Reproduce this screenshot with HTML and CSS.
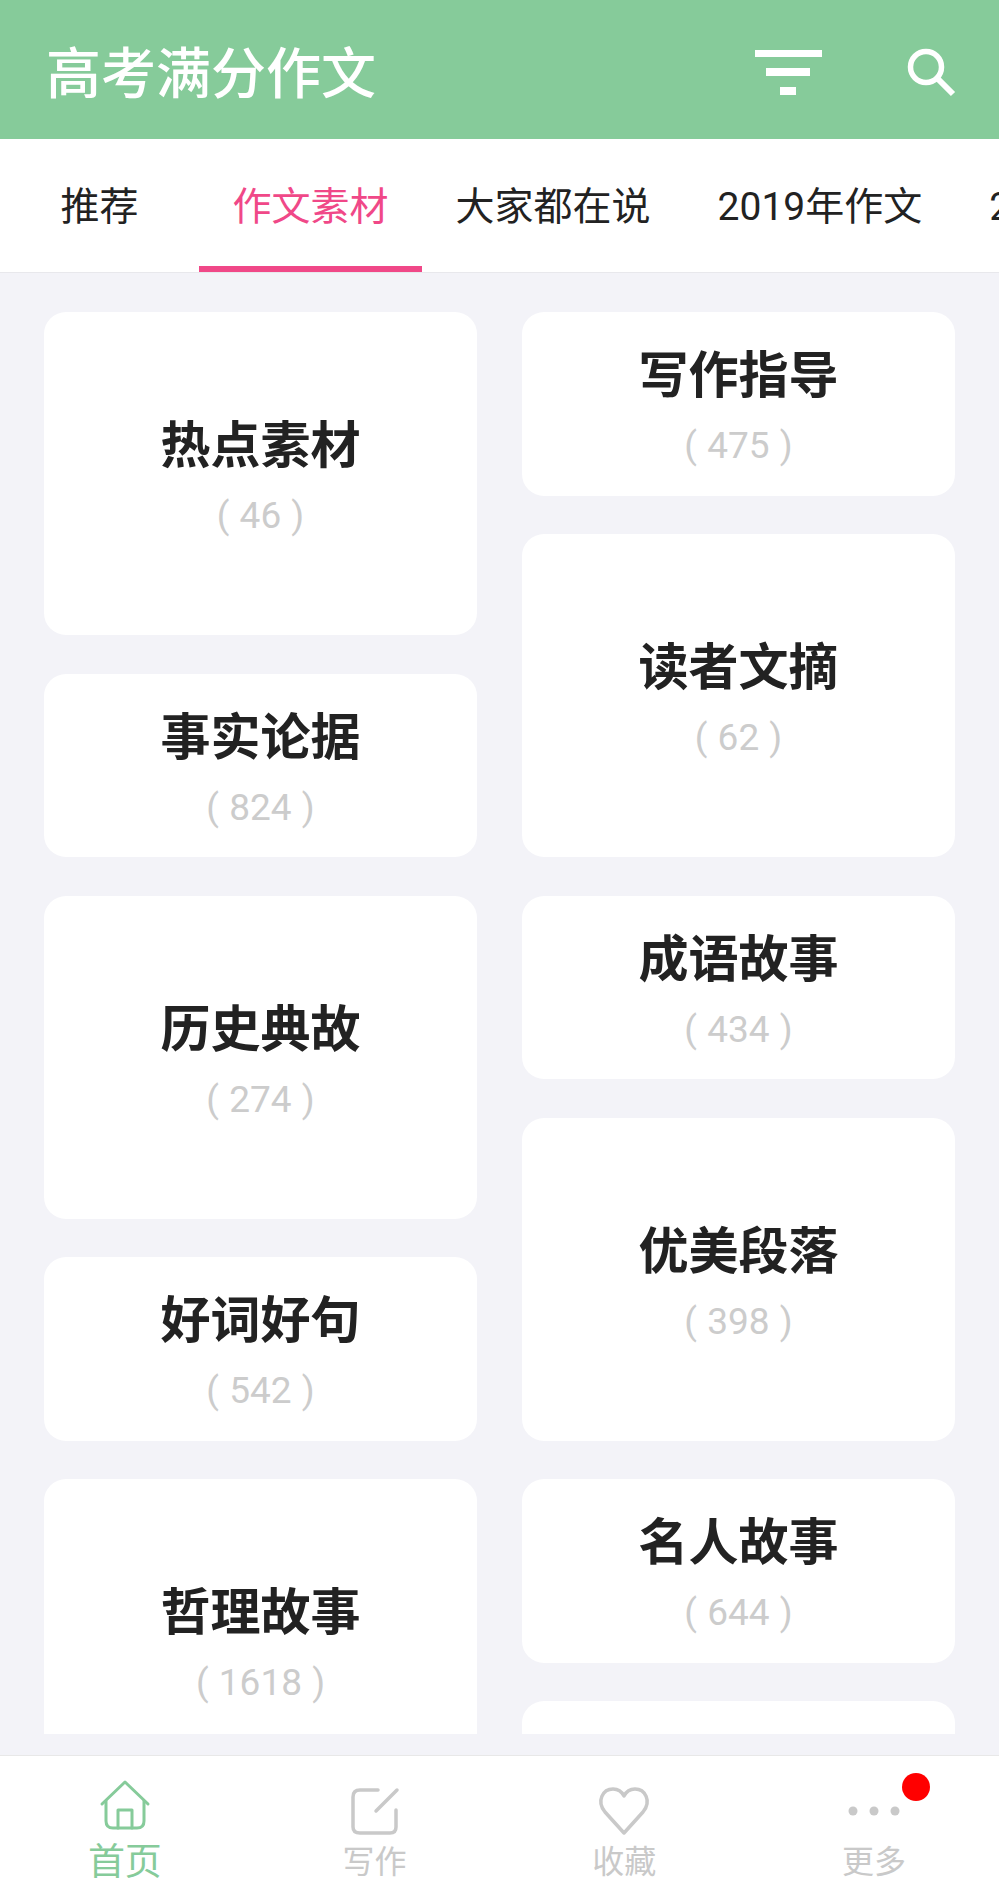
FILE: index.html
```html
<!DOCTYPE html>
<html lang="zh-CN">
<head>
    <meta charset="UTF-8">
    <meta name="viewport" content="width=device-width, initial-scale=1.0">
    <title>高考满分作文</title>
    <link rel="stylesheet" href="styles.css">
</head>
<body>

<header class="topbar">
    <h1 class="app-title">高考满分作文</h1>
    <div class="top-icons">
        <svg class="icon-filter" width="67" height="45" viewBox="0 0 67 45">
            <rect x="0" y="0" width="67" height="7" fill="#fff"/>
            <rect x="11" y="18" width="44" height="8" fill="#fff"/>
            <rect x="25" y="37" width="16" height="8" fill="#fff"/>
        </svg>
        <svg class="icon-search" width="50" height="50" viewBox="0 0 50 50">
            <circle cx="19" cy="19" r="15.5" fill="none" stroke="#fff" stroke-width="5.5"/>
            <path d="M30 30 L46 46" fill="none" stroke="#fff" stroke-width="6"/>
        </svg>
    </div>
</header>

<nav class="tabs">
    <a class="tab first">推荐</a>
    <a class="tab active">作文素材</a>
    <a class="tab">大家都在说</a>
    <a class="tab">2019年作文</a>
    <a class="tab">2018年作文</a>
</nav>

<main class="content">
    <div class="list">
        <div class="column">
            <div class="card tall"><div class="card-title">热点素材</div><div class="card-count">( 46 )</div></div>
            <div class="card"><div class="card-title">事实论据</div><div class="card-count">( 824 )</div></div>
            <div class="card tall"><div class="card-title">历史典故</div><div class="card-count">( 274 )</div></div>
            <div class="card"><div class="card-title">好词好句</div><div class="card-count">( 542 )</div></div>
            <div class="card tall"><div class="card-title">哲理故事</div><div class="card-count">( 1618 )</div></div>
        </div>
        <div class="column">
            <div class="card"><div class="card-title">写作指导</div><div class="card-count">( 475 )</div></div>
            <div class="card tall"><div class="card-title">读者文摘</div><div class="card-count">( 62 )</div></div>
            <div class="card"><div class="card-title">成语故事</div><div class="card-count">( 434 )</div></div>
            <div class="card tall"><div class="card-title">优美段落</div><div class="card-count">( 398 )</div></div>
            <div class="card"><div class="card-title">名人故事</div><div class="card-count">( 644 )</div></div>
            <div class="card"></div>
        </div>
    </div>
</main>

<footer class="bottom-nav">
    <a class="nav-item current">
        <svg width="60" height="60" viewBox="0 0 60 60" fill="none" stroke="#86cb9a" stroke-width="3" stroke-linejoin="round" stroke-linecap="round">
            <path d="M7 27 L30 5 L53 27"/>
            <path d="M11 24 V44 Q11 51 18 51 H42 Q49 51 49 44 V24"/>
            <path d="M23 51 V33 H37 V51"/>
        </svg>
        <span class="nav-label">首页</span>
    </a>
    <a class="nav-item">
        <svg width="60" height="60" viewBox="0 0 60 60" fill="none" stroke="#c9c9c9" stroke-width="3.5" stroke-linecap="round">
            <path d="M33 13 H15 Q8 13 8 20 V50 Q8 56 15 56 H45 Q51 56 51 50 V33"/>
            <path d="M31 34 L52 13"/>
        </svg>
        <span class="nav-label">写作</span>
    </a>
    <a class="nav-item">
        <svg width="60" height="60" viewBox="0 0 60 60" fill="none" stroke="#c9c9c9" stroke-width="3.5" stroke-linejoin="round">
            <path d="M30 56 L11 35 C2 24 9 12 19 12 C24 12 28 15 30 19 C32 15 36 12 41 12 C51 12 58 24 49 35 Z"/>
        </svg>
        <span class="nav-label">收藏</span>
    </a>
    <a class="nav-item">
        <svg width="60" height="60" viewBox="0 0 60 60" fill="#c9c9c9">
            <circle cx="9" cy="34" r="4.5"/>
            <circle cx="30" cy="34" r="4.5"/>
            <circle cx="51" cy="34" r="4.5"/>
        </svg>
        <span class="badge"></span>
        <span class="nav-label">更多</span>
    </a>
</footer>

</body>
</html>
```
FILE: styles.css
```css
* {
    padding: 0;
    margin: 0;
    box-sizing: border-box;
}
body {
    width: 999px;
    height: 1899px;
    display: flex;
    flex-direction: column;
    overflow: hidden;
    background-color: #f3f3f8;
    font-family: "Noto Sans CJK SC", "Noto Sans", sans-serif;
}
.topbar {
    height: 139px;
    flex: none;
    background-color: #86cb9a;
    display: flex;
    align-items: center;
    justify-content: space-between;
    padding: 0 42px 0 46px;
}
.app-title {
    color: #fff;
    font-size: 55px;
    font-weight: 500;
    line-height: 1;
}
.top-icons {
    display: flex;
    align-items: center;
    gap: 85px;
}
.icon-filter {
    margin-top: 5px;
}
.icon-search {
    margin-top: 6px;
}
.tabs {
    height: 134px;
    flex: none;
    display: flex;
    padding-left: 27px;
    background-color: #fff;
    border-bottom: 1px solid #e8e8ec;
    overflow: hidden;
}
.tab {
    flex: none;
    padding: 0 33.5px;
    font-family: Roboto, "Noto Sans CJK SC", sans-serif;
    font-size: 39px;
    line-height: 137px;
    height: 133px;
    color: #222;
    white-space: nowrap;
}
.tab.first {
    margin-right: 27px;
}
.tab.active {
    color: #f04888;
    border-bottom: 6px solid #f04888;
}
.content {
    flex: none;
    height: 1482px;
    padding-bottom: 21px;
}
.list {
    height: 100%;
    padding: 39px 44px 0;
    display: flex;
    gap: 45px;
    overflow: hidden;
}
.column {
    width: 433px;
    flex: none;
    display: flex;
    flex-direction: column;
    gap: 38.5px;
}
.card {
    height: 183.5px;
    flex: none;
    background-color: #fff;
    border-radius: 22px;
    display: flex;
    flex-direction: column;
    align-items: center;
    padding-top: 17px;
}
.card.tall {
    height: 323px;
    padding-top: 87px;
}
.card-title {
    font-size: 50px;
    font-weight: 700;
    line-height: 85px;
    color: #222;
}
.card-count {
    font-family: Roboto, sans-serif;
    font-size: 37px;
    line-height: 63px;
    word-spacing: 1px;
    color: #ccc;
}
.bottom-nav {
    flex: none;
    height: 144px;
    background-color: #fff;
    border-top: 1px solid #e8e8e8;
    display: flex;
    padding-top: 21px;
}
.nav-item {
    flex: 1;
    position: relative;
    display: flex;
    flex-direction: column;
    align-items: center;
    color: #c9c9c9;
    font-size: 32px;
}
.nav-item.current {
    color: #86cb9a;
    font-size: 37px;
}
.nav-label {
    line-height: 44px;
}
.badge {
    position: absolute;
    top: -4px;
    left: 153px;
    width: 28px;
    height: 28px;
    border-radius: 50%;
    background-color: #f00;
}
```
